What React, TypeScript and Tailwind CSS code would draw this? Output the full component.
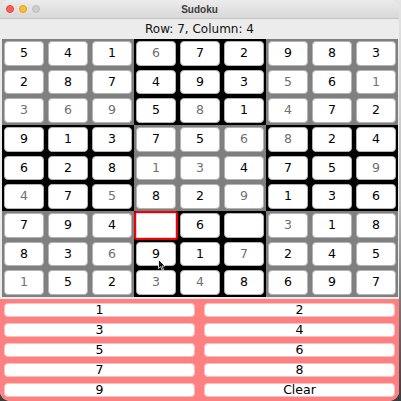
import React from 'react';

const values = [
  '541672983',
  '287493561',
  '369581472',
  '913756824',
  '628134759',
  '475829136',
  '794 6 318',
  '836917245',
  '152348697',
];

// 1 = gray (given) digit
const grayMask = [
  '000100000',
  '000000101',
  '111010100',
  '000001100',
  '000110001',
  '101001000',
  '000000100',
  '001001000',
  '100110000',
];

const keypad = ['1', '2', '3', '4', '5', '6', '7', '8', '9', 'Clear'];

const Cell: React.FC<{ r: number; c: number }> = ({ r, c }) => {
  const v = values[r][c].trim();
  const gray = grayMask[r][c] === '1';
  const dark = (Math.floor(r / 3) + Math.floor(c / 3)) % 2 === 1;
  const selected = r === 6 && c === 3;

  if (selected) {
    return (
      <div className={dark ? 'bg-black' : 'bg-[#7f7f7f]'}>
        <div className="h-full rounded-[3px] border-2 border-[#f20000] bg-white shadow-[inset_0_0_0_1px_#c9d3ee]" />
      </div>
    );
  }

  return (
    <div className={dark ? 'bg-black p-[2px]' : 'bg-[#7f7f7f] p-[2px]'}>
      <div
        className={
          gray
            ? 'h-full rounded-[4px] border border-[#b4b4b4] bg-white flex items-center justify-center text-[12.5px] text-[#707070]'
            : 'h-full rounded-[4px] border border-[#b4b4b4] bg-white flex items-center justify-center text-[12.5px] text-black'
        }
      >
        {v}
      </div>
    </div>
  );
};

const App: React.FC = () => {
  return (
    <div className="w-[401px] h-[401px] bg-gradient-to-b from-[#e4e4e4] via-[#bdbdbd] to-[#3c3c3c] font-['DejaVu_Sans',sans-serif]">
      <div className="relative w-[399px] h-[401px] rounded-[10px] overflow-hidden bg-[#ececec] flex flex-col">
        {/* title bar */}
        <div className="h-[19px] bg-gradient-to-b from-[#ececec] to-[#d8d8d8] border-b border-[#c4c4c4] flex items-center relative">
          <div className="flex items-center gap-[5px] pl-[6px]">
            <div className="w-[8px] h-[8px] rounded-full bg-[#fe5f57] border border-[#e0443e]" />
            <div className="w-[8px] h-[8px] rounded-full bg-[#febc2e] border border-[#dea123]" />
            <div className="w-[8px] h-[8px] rounded-full bg-[#cdcdcd] border border-[#bdbdbd]" />
          </div>
          <div className="absolute inset-0 flex items-center justify-center text-[10px] font-['Liberation_Sans',sans-serif] font-semibold text-[#3c3c3c]">
            Sudoku
          </div>
        </div>

        {/* status */}
        <div className="h-[20px] flex items-center justify-center text-[12px] text-[#111]">
          Row: 7, Column: 4
        </div>

        {/* board */}
        <div className="ml-[2px] w-[396px] h-[258px] grid grid-cols-9 grid-rows-9">
          {values.map((row, r) =>
            row.split('').map((_, c) => <Cell key={`${r}-${c}`} r={r} c={c} />)
          )}
        </div>

        {/* keypad */}
        <div className="mt-[2px] flex-1 bg-[#ff8080] px-[4px] pt-[4px] grid grid-cols-2 gap-x-[9px] gap-y-[6px] content-start">
          {keypad.map((k) => (
            <button
              key={k}
              className="h-[14px] rounded-[4px] bg-white border border-[#f3c2c2] flex items-center justify-center text-[12.5px] leading-none text-black"
            >
              {k}
            </button>
          ))}
        </div>

        {/* mouse pointer */}
        <svg className="absolute left-[158px] top-[259px]" width="8" height="12" viewBox="0 0 8 12">
          <path d="M0.5 0.5 L0.5 9.5 L2.6 7.6 L4.2 11.2 L5.6 10.6 L4.1 7.1 L7 7 Z" fill="#111" stroke="#fff" strokeWidth="0.8" />
        </svg>
      </div>
    </div>
  );
};

export default App;
